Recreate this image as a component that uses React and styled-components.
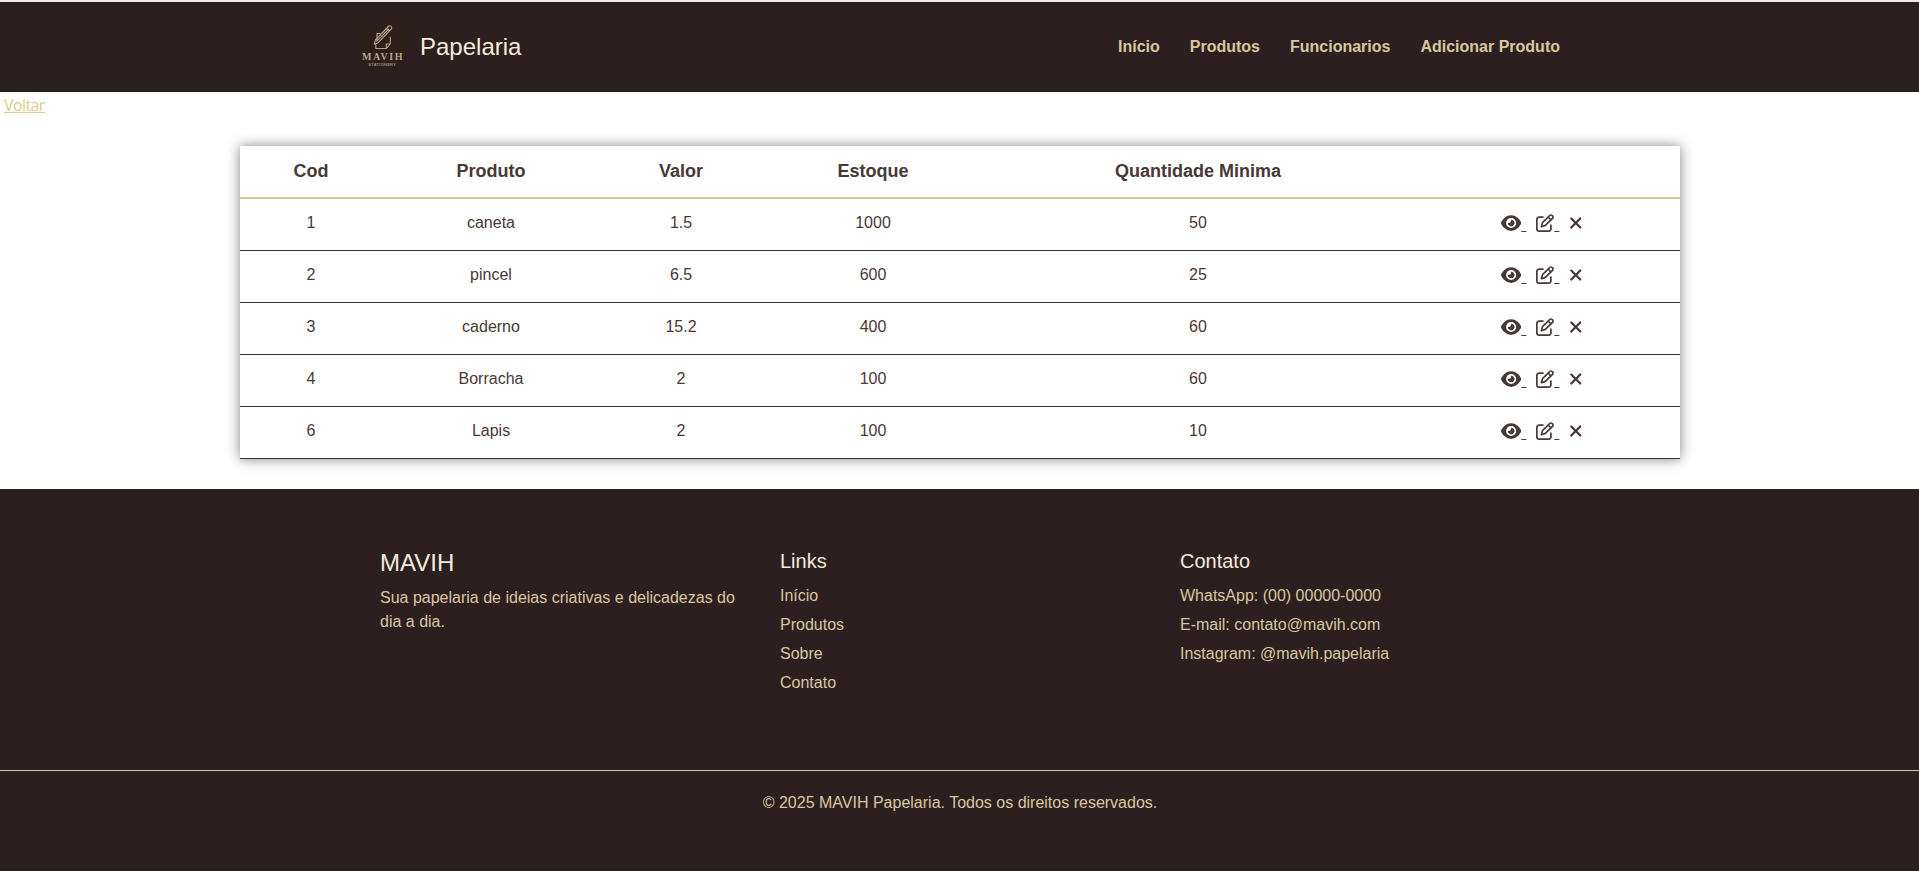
import React from "react";
import styled, { createGlobalStyle } from "styled-components";
import { FaEye, FaRegPenToSquare, FaXmark } from "react-icons/fa6";

const GlobalStyle = createGlobalStyle`
  *, *::before, *::after { box-sizing: border-box; }
  body {
    margin: 0;
    background: #fff;
    font-family: Arial, "Liberation Sans", sans-serif;
    font-size: 16px;
    line-height: 24px;
    overflow: hidden;
  }
`;

const Page = styled.div`
  width: 1920px;
  min-height: 871px;
  display: flex;
  flex-direction: column;
  border-top: 2px solid #efe9e9;
`;

const Header = styled.header`
  height: 90px;
  background: #2c1f1f;
`;

const HeaderInner = styled.div`
  width: 1200px;
  height: 100%;
  margin: 0 auto;
  display: flex;
  align-items: center;
  justify-content: space-between;
`;

const Brand = styled.div`
  display: flex;
  align-items: center;
  gap: 10px;
`;

const BrandName = styled.h1`
  margin: 0 0 2px;
  font-size: 24px;
  font-weight: 400;
  line-height: 29px;
  color: #f5ebdc;
`;

const Nav = styled.nav`
  display: flex;
  gap: 30px;
`;

const NavLink = styled.a`
  font-weight: 700;
  color: #d9c7a0;
`;

const BackRow = styled.div`
  height: 54px;
  padding: 1px 0 0 4px;
`;

const BackLink = styled.a`
  font-family: "Open Sans", "Noto Sans", sans-serif;
  letter-spacing: -0.6px;
  color: #decb8c;
  text-decoration: underline;
`;

const Table = styled.table`
  width: 1440px;
  margin: 0 auto 30px;
  table-layout: fixed;
  border-collapse: separate;
  border-spacing: 0;
  text-align: center;
  color: #4a3737;
  background: #fff;
  box-shadow: 0 0 12px rgba(0, 0, 0, 0.5);
`;

const Col = styled.col`
  width: ${(p) => p.$w}px;
`;

const HeadCell = styled.th`
  height: 53px;
  padding: 0 0 2px;
  border-bottom: 2px solid #d6c5a0;
  font-size: 18px;
  font-weight: 700;
`;

const Cell = styled.td`
  height: 52px;
  padding: 0 0 3px;
  border-bottom: 1px solid #402f30;
`;

const Actions = styled.div`
  display: flex;
  justify-content: center;
  gap: 10px;
  padding: 2px 8px 0 0;
  font-size: 18px;
`;

const ActionLink = styled.a`
  white-space: pre;
  text-decoration: underline;
  svg { vertical-align: -0.125em; }
`;

const EyeIcon = styled(FaEye)`
  width: 20.25px;
  height: 18px;
`;

const CloseIcon = styled(FaXmark)`
  width: 13.5px;
  height: 18px;
`;

const Footer = styled.footer`
  flex: 1;
  background: #2c1f1f;
  color: #d9c7a0;
`;

const FooterColumns = styled.div`
  width: 1200px;
  height: 281px;
  margin: 0 auto;
  padding-top: 60px;
  display: grid;
  grid-template-columns: repeat(3, 400px);
`;

const FooterColumn = styled.div`
  padding: 0 20px;
`;

const FooterTitle = styled.h3`
  margin: 0 0 8px;
  font-size: ${(p) => (p.$large ? 24 : 20)}px;
  font-weight: 400;
  line-height: 1.2;
  color: #f5ebdc;
`;

const FooterText = styled.p`
  margin: 0;
`;

const FooterList = styled.ul`
  margin: 0;
  padding: 0;
  list-style: none;
  line-height: 29px;
`;

const Copyright = styled.p`
  margin: 0;
  padding-top: 20px;
  border-top: 1px solid #d9c7a0;
  text-align: center;
`;

const Logo = () => (
  <svg width="50" height="50" viewBox="0 0 50 50">
    <rect x="1" width="46" height="50" fill="#2b1f1a" />
    <g fill="none" stroke="#b9a688" strokeWidth="1.1" strokeLinejoin="round" strokeLinecap="round">
      <path d="M20 11.5h-3v7M15.8 22.5v4h10.5l4-4.5V15M30.3 22h-4v4.5" />
      <path d="M14.3 22.2l1.2-4.3L28.3 4.5a1.9 1.9 0 0 1 2.9 2.7L18.2 20.7zM16.8 19.2L28.8 7M26.6 6.3l2.7 2.6" />
    </g>
    <text x="2" y="38.3" textLength="40.5" fontFamily="Liberation Serif, serif" fontSize="10" fontWeight="700" fill="#b9a688">MAVIH</text>
    <text x="8.3" y="44.2" textLength="27.5" fontFamily="Liberation Sans, sans-serif" fontSize="4" fontWeight="700" fill="#a08f74">STATIONERY</text>
  </svg>
);

const navItems = ["Início", "Produtos", "Funcionarios", "Adicionar Produto"];
const columnWidths = [142, 218, 162, 222, 428, 268];
const headings = ["Cod", "Produto", "Valor", "Estoque", "Quantidade Minima", ""];
const products = [
  ["1", "caneta", "1.5", "1000", "50"],
  ["2", "pincel", "6.5", "600", "25"],
  ["3", "caderno", "15.2", "400", "60"],
  ["4", "Borracha", "2", "100", "60"],
  ["6", "Lapis", "2", "100", "10"],
];
const footerLinks = ["Início", "Produtos", "Sobre", "Contato"];
const contacts = [
  "WhatsApp: (00) 00000-0000",
  "E-mail: contato@mavih.com",
  "Instagram: @mavih.papelaria",
];

const RowActions = () => (
  <Actions>
    <ActionLink><EyeIcon />{"\u00a0"}</ActionLink>
    <ActionLink><FaRegPenToSquare />{"\u00a0"}</ActionLink>
    <ActionLink><CloseIcon /></ActionLink>
  </Actions>
);

export default function App() {
  return (
    <>
      <GlobalStyle />
      <Page>
        <Header>
          <HeaderInner>
            <Brand>
              <Logo />
              <BrandName>Papelaria</BrandName>
            </Brand>
            <Nav>
              {navItems.map((item) => <NavLink key={item}>{item}</NavLink>)}
            </Nav>
          </HeaderInner>
        </Header>
        <BackRow><BackLink>Voltar</BackLink></BackRow>
        <Table>
          <colgroup>
            {columnWidths.map((w, i) => <Col key={i} $w={w} />)}
          </colgroup>
          <thead>
            <tr>{headings.map((h) => <HeadCell key={h}>{h}</HeadCell>)}</tr>
          </thead>
          <tbody>
            {products.map((row) => (
              <tr key={row[0]}>
                {row.map((value, i) => <Cell key={i}>{value}</Cell>)}
                <Cell><RowActions /></Cell>
              </tr>
            ))}
          </tbody>
        </Table>
        <Footer>
          <FooterColumns>
            <FooterColumn>
              <FooterTitle $large>MAVIH</FooterTitle>
              <FooterText>Sua papelaria de ideias criativas e delicadezas do dia a dia.</FooterText>
            </FooterColumn>
            <FooterColumn>
              <FooterTitle>Links</FooterTitle>
              <FooterList>{footerLinks.map((l) => <li key={l}>{l}</li>)}</FooterList>
            </FooterColumn>
            <FooterColumn>
              <FooterTitle>Contato</FooterTitle>
              <FooterList>{contacts.map((c) => <li key={c}>{c}</li>)}</FooterList>
            </FooterColumn>
          </FooterColumns>
          <Copyright>© 2025 MAVIH Papelaria. Todos os direitos reservados.</Copyright>
        </Footer>
      </Page>
    </>
  );
}
